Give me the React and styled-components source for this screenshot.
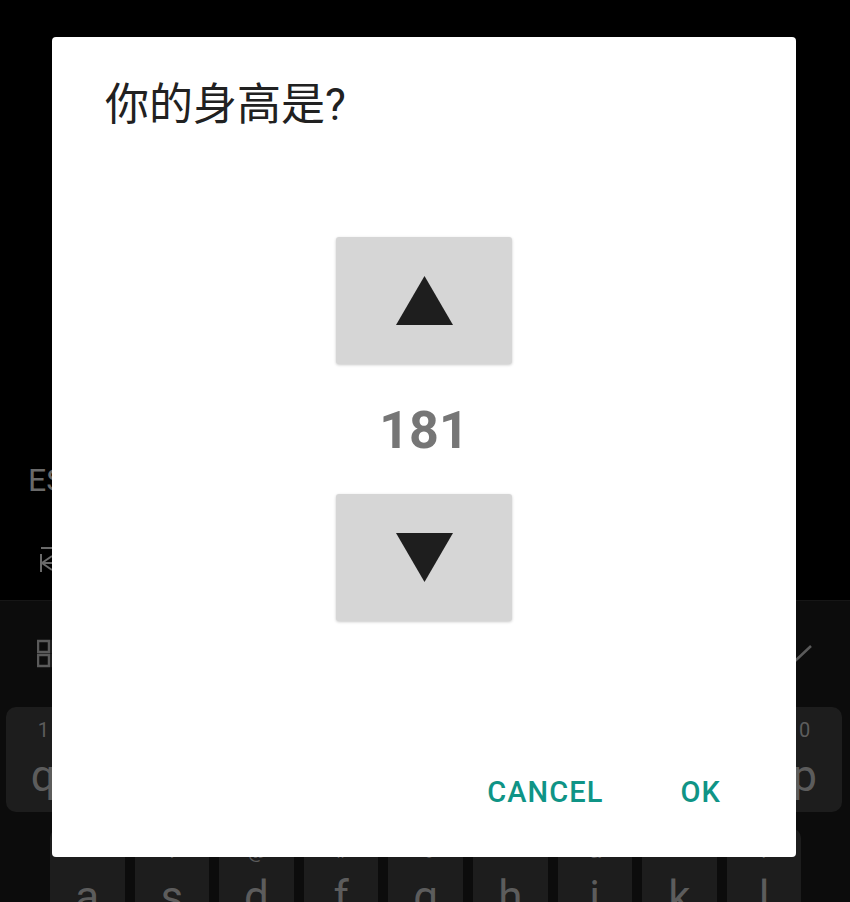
import styled, { createGlobalStyle } from "styled-components";

const GlobalStyle = createGlobalStyle`
	html, body {
		margin: 0;
		padding: 0;
		background: #000;
	}
	body {
		font-family: Roboto, "Noto Sans CJK SC", sans-serif;
	}
`;

const Screen = styled.div`
	position: relative;
	width: 850px;
	height: 902px;
	overflow: hidden;
	display: flex;
	flex-direction: column;
	background: #000;
`;

const TopArea = styled.div`
	height: 600px;
	flex-shrink: 0;
	display: flex;
	flex-direction: column;
	padding: 464px 0 0 28px;
	box-sizing: border-box;
	gap: 48px;
`;

const Lang = styled.div`
	font-size: 32px;
	line-height: 32px;
	color: #6a6a6a;
`;

const Keyboard = styled.div`
	flex: 1;
	min-height: 0;
	overflow: hidden;
	background: #0c0c0c;
	border-top: 1px solid #161616;
	display: flex;
	flex-direction: column;
	gap: 16px;
`;

const Toolbar = styled.div`
	height: 106px;
	flex-shrink: 0;
	display: flex;
	align-items: center;
	justify-content: space-between;
	padding: 0 36px 0 37px;
	margin-bottom: -16px;
`;

const KeyRow = styled.div`
	display: flex;
	flex-shrink: 0;
	gap: 10px;
	padding-left: ${(p) => p.$offset}px;
`;

const Key = styled.div`
	width: 74.6px;
	height: 105px;
	flex-shrink: 0;
	background: #1d1d1d;
	border-radius: 10px;
	color: #5c5c5c;
	display: flex;
	flex-direction: column;
	align-items: center;
	box-sizing: border-box;
	padding-top: 12px;
`;

const KeyHint = styled.span`
	font-size: 20px;
	line-height: 22px;
	height: 22px;
`;

const KeyLetter = styled.span`
	font-size: 44px;
	line-height: 50px;
	margin-top: 10px;
`;

const Dialog = styled.div`
	position: absolute;
	left: 52px;
	top: 37px;
	width: 744px;
	background: #fff;
	border-radius: 4px;
	display: flex;
	flex-direction: column;
	padding: 46px 0 51px;
	box-sizing: border-box;
`;

const Title = styled.h2`
	margin: 0 0 0 53px;
	font-size: 44px;
	line-height: 44px;
	font-weight: 400;
	color: #212121;
	font-family: Roboto, "Noto Sans CJK SC", sans-serif;
`;

const Picker = styled.div`
	display: flex;
	flex-direction: column;
	align-items: center;
	margin-top: 110px;
`;

const StepButton = styled.button`
	width: 176px;
	height: 127px;
	border: none;
	border-radius: 3px;
	background: #d6d6d6;
	box-shadow: 0 1px 3px rgba(0, 0, 0, 0.22);
	display: flex;
	align-items: center;
	justify-content: center;
	padding: 0;
	cursor: pointer;
`;

const Value = styled.div`
	margin: 41px 0 37px;
	font-size: 52px;
	line-height: 52px;
	font-weight: 700;
	color: #767676;
`;

const Actions = styled.div`
	display: flex;
	justify-content: flex-end;
	gap: 77px;
	padding-right: 75px;
	margin-top: 157px;
`;

const ActionButton = styled.button`
	border: none;
	background: none;
	padding: 0;
	font-family: Roboto, sans-serif;
	font-size: 29px;
	line-height: 28px;
	font-weight: 500;
	letter-spacing: 1.1px;
	color: #0f9486;
	cursor: pointer;
`;

const Triangle = ({ down }) => (
	<svg width="57" height="49" viewBox="0 0 57 49">
		<polygon
			points={down ? "0,0 57,0 28.5,49" : "28.5,0 57,49 0,49"}
			fill="#1e1e1e"
		/>
	</svg>
);

const row1 = [
	["1", "q"], ["2", "w"], ["3", "e"], ["4", "r"], ["5", "t"],
	["6", "y"], ["7", "u"], ["8", "i"], ["9", "o"], ["0", "p"],
];
const row2 = [
	["~", "a"], ["!", "s"], ["@", "d"], ["#", "f"], ["%", "g"],
	["^", "h"], ["&", "j"], ["*", "k"], ["?", "l"],
];

const App = () => {
	return (
		<>
			<GlobalStyle />
			<Screen>
				<TopArea>
					<Lang>ES</Lang>
					<svg width="30" height="30" viewBox="0 0 30 30">
						<path
							d="M13 4 H40 M13 10 V28 M24 12 L14 19 L24 26 M14 19 H40"
							stroke="#6a6a6a"
							strokeWidth="2"
							fill="none"
						/>
					</svg>
				</TopArea>
				<Keyboard>
					<Toolbar>
						<svg width="30" height="30" viewBox="0 0 30 30">
							<rect x="1" y="2" width="11" height="11" stroke="#5a5a5a" strokeWidth="2.5" fill="none" />
							<rect x="1" y="16" width="11" height="11" stroke="#5a5a5a" strokeWidth="2.5" fill="none" />
							<rect x="16" y="2" width="11" height="11" stroke="#5a5a5a" strokeWidth="2.5" fill="none" />
							<rect x="16" y="16" width="11" height="11" stroke="#5a5a5a" strokeWidth="2.5" fill="none" />
						</svg>
						<svg width="30" height="24" viewBox="0 0 30 24">
							<path d="M2 12 L10 20 L27 4" stroke="#5a5a5a" strokeWidth="2.5" fill="none" />
						</svg>
					</Toolbar>
					<KeyRow $offset={6}>
						{row1.map(([hint, letter]) => (
							<Key key={letter}>
								<KeyHint>{hint}</KeyHint>
								<KeyLetter>{letter}</KeyLetter>
							</Key>
						))}
					</KeyRow>
					<KeyRow $offset={50}>
						{row2.map(([hint, letter]) => (
							<Key key={letter}>
								<KeyHint>{hint}</KeyHint>
								<KeyLetter>{letter}</KeyLetter>
							</Key>
						))}
					</KeyRow>
				</Keyboard>

				<Dialog>
					<Title>你的身高是?</Title>
					<Picker>
						<StepButton aria-label="increase">
							<Triangle />
						</StepButton>
						<Value>181</Value>
						<StepButton aria-label="decrease">
							<Triangle down />
						</StepButton>
					</Picker>
					<Actions>
						<ActionButton>CANCEL</ActionButton>
						<ActionButton>OK</ActionButton>
					</Actions>
				</Dialog>
			</Screen>
		</>
	);
};

export default App;
